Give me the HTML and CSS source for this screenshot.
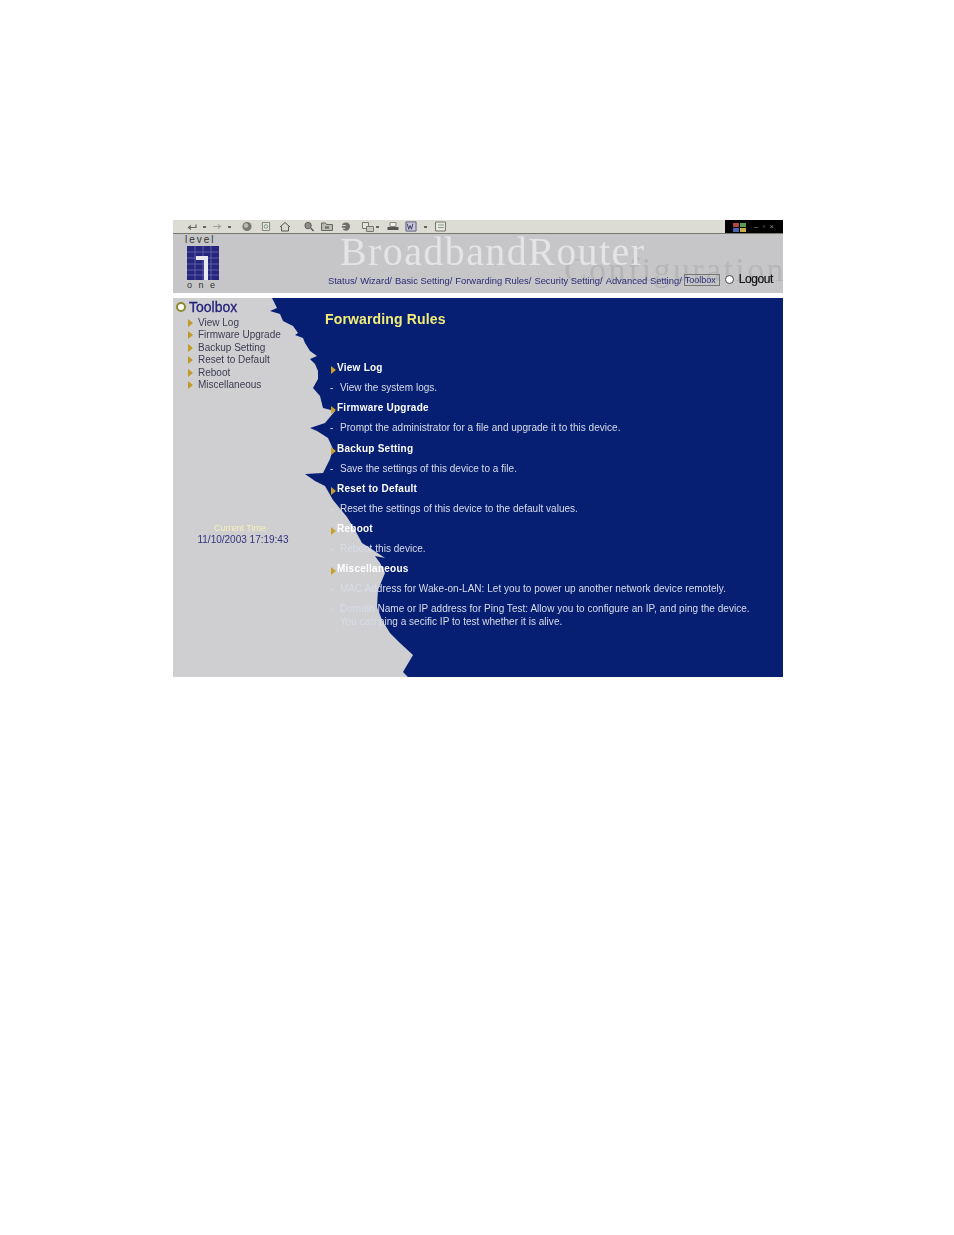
FILE: index.html
```html
<!DOCTYPE html>
<html lang="en">
<head>
<meta charset="utf-8">
<title>BroadbandRouter Configuration</title>
<link rel="stylesheet" href="styles.css">
</head>
<body>
<div class="shot">
  <div class="chrome">
    <div class="tools">
      <svg class="ic w10" viewBox="0 0 10 8"><path d="M9 2v3H2M4 3 1.500 5 4 7" class="ln"/></svg>
      <span class="dd m6"></span>
      <svg class="ic w10 m6" viewBox="0 0 10 8"><path d="M1 4h7M6 2l2.500 2L6 6" class="ln pale"/></svg>
      <span class="dd m6"></span>
      <svg class="ic w12 m10" viewBox="0 0 12 12"><circle cx="6" cy="6" r="5" fill="#77786f"/><circle cx="5" cy="5" r="2.500" fill="#b9bab2"/></svg>
      <svg class="ic w10 m8" viewBox="0 0 10 10"><path d="M1 .5h8v9H1z" fill="#e6e6de" stroke="#77786f"/><circle cx="5" cy="5" r="2" fill="none" stroke="#6f8a6f"/></svg>
      <svg class="ic w12 m8" viewBox="0 0 12 10"><path d="M1 5.500 6 1l5 4.500M2.500 5v4.500h7V5" fill="#d8d8d0" stroke="#55564f"/></svg>
      <svg class="ic w12 m12" viewBox="0 0 12 12"><circle cx="5" cy="5" r="3.500" fill="#8c8d86" stroke="#55564f"/><path d="m8 8 3 3" stroke="#55564f" stroke-width="1.500"/></svg>
      <svg class="ic w12 m6" viewBox="0 0 12 10"><path d="M.5 1.500h4l1 1.500h6v6H.5z" fill="#b9bab2" stroke="#66675f"/><path d="M4 5h4v2H4z" fill="#66675f"/></svg>
      <svg class="ic w12 m6" viewBox="0 0 12 12"><circle cx="7" cy="6" r="4.500" fill="#6f706a"/><path d="M0 8h6M2 5h5" stroke="#e4e3dc"/></svg>
      <svg class="ic w12 m11" viewBox="0 0 12 11"><path d="M.5 1.500h6v6h-6z" fill="#e6e6de" stroke="#77786f"/><path d="M4.500 5.500h7v5h-7z" fill="#c7c8c0" stroke="#77786f"/></svg>
      <span class="dd m2"></span>
      <svg class="ic w12 m8" viewBox="0 0 12 10"><path d="M3 1h6v4H3z" fill="#efefe8" stroke="#88897f"/><path d="M.5 5.500h11v3H.5z" fill="#55564f"/></svg>
      <svg class="ic w12 m6" viewBox="0 0 12 12"><path d="M.5 1h11v10H.5z" fill="#c9c9d6" stroke="#55557a"/><path d="m2 3 1.500 6L5 5l1.500 4L8 3" fill="none" stroke="#34346a"/></svg>
      <span class="dd m7"></span>
      <svg class="ic w12 m8" viewBox="0 0 12 11"><path d="M.5 1h10v9H.5z" fill="#e6e6de" stroke="#77786f"/><path d="M3 4h6M3 6.500h6" stroke="#8e9f8e"/></svg>
    </div>
    <div class="winctl">
      <svg class="winlogo" viewBox="0 0 14 10"><path d="M0 1h6v4H0z" fill="#b5473f"/><path d="M7 1h6v4H7z" fill="#5d9b58"/><path d="M0 6h6v4H0z" fill="#4b65b0"/><path d="M7 6h6v4H7z" fill="#c7ae4a"/></svg>
      <span>–</span><span>▫</span><span>×</span>
    </div>
  </div>

  <header class="head">
    <div class="logo">
      <div class="logo-word">level</div>
      <svg class="logo-mark" viewBox="0 0 32 34">
        <path fill="#26267e" d="M0 0h32v34H0z"/>
        <path stroke="#6b6bb0" stroke-width=".8" d="M8 0v34M16 0v34M24 0v34M0 6h32M0 12h32M0 18h32M0 24h32M0 29h32"/>
        <path fill="#e8e8ee" d="M9 10h12v24h-4V14H9z"/>
      </svg>
      <div class="logo-word low">one</div>
    </div>
    <div class="brand">
      <div class="config">Configuration</div>
      <div class="title">BroadbandRouter</div>
      <nav class="nav">
        <span>Status/</span><span>Wizard/</span><span>Basic Setting/</span><span>Forwarding Rules/</span><span>Security Setting/</span><span>Advanced Setting/</span><span class="current">Toolbox</span>
        <span class="radio"></span><span class="logout">Logout</span>
      </nav>
    </div>
  </header>

  <main class="main">
    <svg class="torn" viewBox="173 298 610 379" preserveAspectRatio="none">
      <path fill="#061f73" d="M272 298 277 308 270 311 280 314 283 321 293 326 298 333 295 335 303 338 305 343 310 351 317 356 310 359 315 364 318 371 318 379 313 388 320 396 323 408 335 411 325 423 310 428 317 431 328 438 333 449 330 459 323 473 305 474 315 481 325 486 333 500 347 517 355 530 362 543 370 548 385 558 375 556 380 563 385 573 378 590 377 607 382 620 390 633 400 643 413 655 403 672 408 677H783V298z"/>
    </svg>
    <aside class="side">
      <div class="side-title"><span class="ring"></span>Toolbox</div>
      <ul class="menu">
        <li>View Log</li>
        <li>Firmware Upgrade</li>
        <li>Backup Setting</li>
        <li>Reset to Default</li>
        <li>Reboot</li>
        <li>Miscellaneous</li>
      </ul>
      <div class="clock">
        <div class="clock-label">Current Time</div>
        <div class="clock-value">11/10/2003 17:19:43</div>
      </div>
    </aside>
    <section class="content">
      <h1>Forwarding Rules</h1>
      <div class="item"><h2>View Log</h2><p>View the system logs.</p></div>
      <div class="item"><h2>Firmware Upgrade</h2><p>Prompt the administrator for a file and upgrade it to this device.</p></div>
      <div class="item"><h2>Backup Setting</h2><p>Save the settings of this device to a file.</p></div>
      <div class="item"><h2>Reset to Default</h2><p>Reset the settings of this device to the default values.</p></div>
      <div class="item"><h2>Reboot</h2><p>Reboot this device.</p></div>
      <div class="item"><h2>Miscellaneous</h2>
        <p class="tight">MAC Address for Wake-on-LAN: Let you to power up another network device remotely.</p>
        <p>Domain Name or IP address for Ping Test: Allow you to configure an IP, and ping the device.<br>You can ping a secific IP to test whether it is alive.</p>
      </div>
    </section>
  </main>
</div>
</body>
</html>
```
FILE: styles.css
```css
* { box-sizing: border-box; }
html, body { margin: 0; background: #fff; }
body { height: 1235px; overflow: hidden; font-family: "Liberation Sans", Arial, sans-serif; }
.shot { width: 610px; height: 457px; margin: 220px 0 0 173px; filter: blur(.55px); background: #fff; }

.chrome { height: 14px; display: flex; background: #dcdbd4; border-bottom: 1px solid #77786f; }
.tools { flex: 1; display: flex; align-items: center; padding-left: 14px; }
.ic { display: block; flex: none; }
.w10 { width: 10px; height: 9px; }
.w12 { width: 12px; height: 11px; }
.m2 { margin-left: 2px; }
.m6 { margin-left: 6px; }
.m7 { margin-left: 7px; }
.m8 { margin-left: 8px; }
.m10 { margin-left: 10px; }
.m11 { margin-left: 11px; }
.m12 { margin-left: 12px; }
.ln { fill: none; stroke: #66675f; stroke-width: 1.2; }
.pale { stroke: #a3a49c; }
.dd { width: 3px; height: 2px; background: #66675f; }
.winctl { width: 58px; background: #000; color: #8d8d8d; display: flex; align-items: center; gap: 4px; padding-left: 8px; font-size: 8px; }
.winlogo { width: 14px; height: 10px; margin-right: 3px; }

.head { height: 59px; background: #c6c6c8; display: flex; }
.logo { width: 60px; padding: 2px 0 0 12px; color: #333; }
.logo-word { font-size: 10px; line-height: 8px; letter-spacing: 2px; white-space: nowrap; }
.logo-word.low { font-size: 9px; letter-spacing: 6.500px; line-height: 7px; margin-top: 2px; padding-left: 2px; }
.logo-mark { display: block; width: 32px; height: 34px; margin: 2px 0 0 2px; }
.brand { flex: 1; position: relative; padding-left: 107px; }
.title { position: relative; font-family: "Liberation Serif", serif; font-size: 40px; line-height: 36px; color: #e4e4e6; letter-spacing: 1.400px; white-space: nowrap; }
.config { position: absolute; right: -3px; top: 18px; font-family: "Liberation Serif", serif; font-size: 34px; line-height: 36px; letter-spacing: 2.400px; color: #b6b6b8; white-space: nowrap; }
.nav { position: relative; display: flex; align-items: center; height: 18px; margin: 1px 0 0 -12px; gap: 3px; font-size: 9.400px; color: #2b2b78; white-space: nowrap; }
.current { border: 1px solid #777; line-height: 10px; width: 36px; overflow: hidden; font-size: 9px; margin-left: -1px; }
.radio { width: 9px; height: 9px; border-radius: 50%; border: 1.500px solid #444; background: #fff; margin-left: 2px; margin-top: -2px; }
.logout { font-size: 12px; color: #111; margin-left: 2px; margin-top: -2px; letter-spacing: -.4px; -webkit-text-stroke: .2px #111; }

.main { position: relative; height: 379px; margin-top: 5px; background: #cfcfd2; display: flex; }
.torn { position: absolute; inset: 0; width: 100%; height: 100%; }
.side, .content { position: relative; }
.side { width: 152px; padding: 0 0 0 3px; }
.side-title { display: flex; align-items: center; gap: 3px; height: 18px; font-size: 14px; -webkit-text-stroke: .3px #22227a; color: #22227a; }
.ring { width: 10px; height: 10px; border-radius: 50%; border: 2px solid #8f8a2e; background: #fff; }
.menu { list-style: none; margin: 1px 0 0; padding: 0 0 0 22px; font-size: 10px; line-height: 12.400px; color: #3c3c52; }
.menu li { position: relative; }
.menu li::before { content: ""; position: absolute; left: -10px; top: 2px; border-left: 5px solid #c29a2a; border-top: 4px solid transparent; border-bottom: 4px solid transparent; }
.clock { margin: 131px 0 0 21px; width: 92px; text-align: center; white-space: nowrap; }
.clock-label { color: #f4f0b4; font-size: 9px; line-height: 12px; padding-right: 6px; }
.clock-value { color: #34347c; font-size: 10px; line-height: 12px; }

.content { flex: 1; color: #d8dce8; }
h1 { margin: 13px 0 0; height: 51px; font-size: 14px; line-height: 16px; letter-spacing: .15px; color: #f2ec78; }
.item { padding: 0 0 0 12px; }
h2 { position: relative; margin: 0; height: 13px; font-size: 10px; line-height: 12px; color: #fff; letter-spacing: .25px; }
h2::before { content: ""; position: absolute; left: -6px; top: 4px; border-left: 5px solid #c9a02e; border-top: 4px solid transparent; border-bottom: 4px solid transparent; }
p { position: relative; margin: 6px 0 8.300px 3px; font-size: 10px; line-height: 13px; letter-spacing: .03px; white-space: nowrap; }
p::before { content: "-"; position: absolute; left: -10px; top: 0; }
p.tight { margin-bottom: 7px; }
```
